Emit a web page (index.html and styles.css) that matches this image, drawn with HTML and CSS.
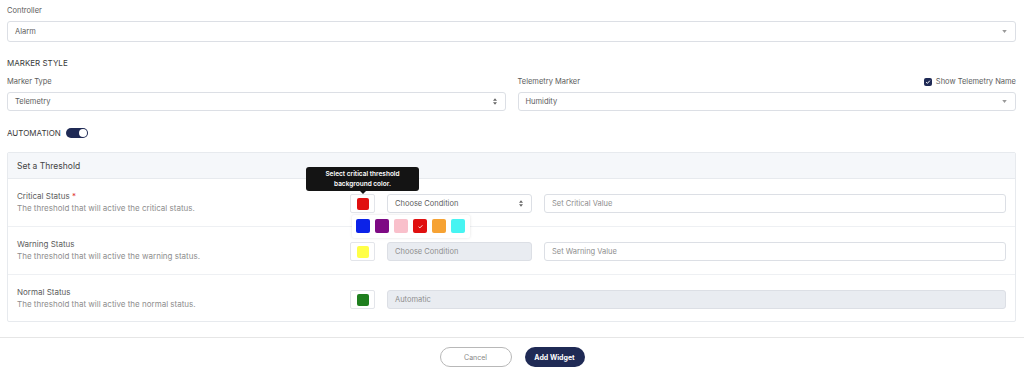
FILE: index.html
```html
<!DOCTYPE html>
<html>
  <head>
    <meta charset="utf-8" />
    <meta name="viewport" content="width=device-width, initial-scale=1" />
    <link rel="stylesheet" href="styles.css">
  </head>
  <body>
    <div class="form">
      <div class="field-label">Controller</div>
      <div class="select tall">
        <span>Alarm</span>
        <svg class="caret" viewBox="0 0 6 4" width="5" height="3"><path d="M0 0 L6 0 L3 4 Z" fill="#999"/></svg>
      </div>

      <div class="section-title">MARKER STYLE</div>
      <div class="two-col">
        <div>
          <div class="field-label">Marker Type</div>
          <div class="select">
            <span>Telemetry</span>
            <svg class="updown" viewBox="0 0 6 10" width="4" height="7"><path d="M0 4 L6 4 L3 0 Z M0 6 L6 6 L3 10 Z" fill="#666"/></svg>
          </div>
        </div>
        <div>
          <div class="field-label split">
            <span>Telemetry Marker</span>
            <span class="check-wrap">
              <span class="checkbox">
                <svg viewBox="0 0 8 8" width="6" height="6"><path d="M1.5 4.2 L3.2 5.8 L6.5 2.2" fill="none" stroke="#fff" stroke-width="1.3"/></svg>
              </span>
              Show Telemetry Name
            </span>
          </div>
          <div class="select">
            <span>Humidity</span>
            <svg class="caret" viewBox="0 0 6 4" width="5" height="3"><path d="M0 0 L6 0 L3 4 Z" fill="#999"/></svg>
          </div>
        </div>
      </div>

      <div class="automation">
        <span>AUTOMATION</span>
        <span class="toggle"><span class="knob"></span></span>
      </div>

      <div class="panel">
        <div class="panel-header">Set a Threshold</div>

        <div class="threshold-row">
          <div class="row-text">
            <div class="row-title">Critical Status <span class="required">*</span></div>
            <div class="row-desc">The threshold that will active the critical status.</div>
          </div>
          <div class="swatch-cell">
            <div class="swatch-box"><span class="swatch red"></span></div>
            <div class="tooltip">Select critical threshold<br>background color.</div>
            <div class="palette">
              <span class="swatch blue"></span>
              <span class="swatch purple"></span>
              <span class="swatch pink"></span>
              <span class="swatch red selected">
                <svg viewBox="0 0 8 8" width="7" height="7"><path d="M1.8 4.2 L3.3 5.6 L6.2 2.6" fill="none" stroke="#fff" stroke-width="1"/></svg>
              </span>
              <span class="swatch orange"></span>
              <span class="swatch cyan"></span>
            </div>
          </div>
          <div class="select small">
            <span>Choose Condition</span>
            <svg class="updown" viewBox="0 0 6 10" width="4" height="7"><path d="M0 4 L6 4 L3 0 Z M0 6 L6 6 L3 10 Z" fill="#666"/></svg>
          </div>
          <div class="input placeholder">Set Critical Value</div>
        </div>

        <div class="threshold-row">
          <div class="row-text">
            <div class="row-title">Warning Status</div>
            <div class="row-desc">The threshold that will active the warning status.</div>
          </div>
          <div class="swatch-cell">
            <div class="swatch-box"><span class="swatch yellow"></span></div>
          </div>
          <div class="input disabled">Choose Condition</div>
          <div class="input placeholder">Set Warning Value</div>
        </div>

        <div class="threshold-row last">
          <div class="row-text">
            <div class="row-title">Normal Status</div>
            <div class="row-desc">The threshold that will active the normal status.</div>
          </div>
          <div class="swatch-cell">
            <div class="swatch-box"><span class="swatch green"></span></div>
          </div>
          <div class="input disabled wide">Automatic</div>
        </div>
      </div>
    </div>

    <div class="footer">
      <button class="btn cancel">Cancel</button>
      <button class="btn primary">Add Widget</button>
    </div>
  </body>
</html>
```

FILE: styles.css
```css
html,
body,
div {
  margin: 0;
  padding: 0;
  box-sizing: border-box;
}

body {
  font-family: Inter, Roboto, "Liberation Sans", sans-serif;
  font-size: 7.5px;
  color: #5a5a5a;
  background: #fff;
}

.form {
  padding: 5px 8px 0 7px;
}

.field-label {
  height: 12px;
  line-height: 12px;
  margin-bottom: 4px;
  color: #5c5c5c;
}
.field-label.split {
  display: flex;
  justify-content: space-between;
  align-items: center;
}
.check-wrap {
  display: flex;
  align-items: center;
  gap: 4px;
  color: #5c5c5c;
}
.checkbox {
  display: flex;
  align-items: center;
  justify-content: center;
  width: 8px;
  height: 8px;
  border-radius: 2px;
  background: #1f2a55;
}

.select,
.input {
  display: flex;
  align-items: center;
  justify-content: space-between;
  height: 19px;
  padding: 0 8px 0 7px;
  border: 1px solid #dcdfe5;
  border-radius: 3px;
  background: #fff;
  color: #5c5c5c;
  font-size: 7.5px;
}
.select.tall {
  height: 21px;
}
.caret,
.updown {
  flex: none;
}

.section-title {
  margin-top: 15px;
  height: 12px;
  line-height: 12px;
  color: #3a3a3a;
  font-size: 8px;
}
.section-title + .two-col {
  margin-top: 7px;
}

.two-col {
  display: grid;
  grid-template-columns: 1fr 1fr;
  column-gap: 12px;
}

.automation {
  display: flex;
  align-items: center;
  gap: 5px;
  margin-top: 16px;
  height: 12px;
  color: #3a3a3a;
  font-size: 8px;
}
.toggle {
  display: flex;
  align-items: center;
  justify-content: flex-end;
  width: 20px;
  height: 10px;
  padding: 0 1px;
  border-radius: 5px;
  background: #1f2a55;
}
.toggle .knob {
  width: 8px;
  height: 8px;
  border-radius: 50%;
  background: #fff;
}

.panel {
  margin-top: 13px;
  border: 1px solid #e7eaee;
  border-radius: 2px;
}
.panel-header {
  height: 26px;
  line-height: 26px;
  padding-left: 9px;
  background: #f5f7fa;
  border-bottom: 1px solid #e7eaee;
  color: #444;
  font-size: 8.5px;
}

.threshold-row {
  display: grid;
  grid-template-columns: 321px 25px 145px 1fr;
  column-gap: 12px;
  align-items: start;
  height: 48px;
  padding: 11px 9px 0;
  border-bottom: 1px solid #eef0f3;
}
.threshold-row.last {
  height: 46px;
  border-bottom: 0;
}
.row-title,
.row-desc {
  height: 12px;
  line-height: 12px;
  white-space: nowrap;
}
.row-title {
  color: #5c5c5c;
  font-size: 8px;
}
.row-desc {
  color: #8e8e8e;
  font-size: 8px;
}
.required {
  color: #e03030;
}

.threshold-row .select,
.threshold-row .input {
  margin-top: 4px;
  height: 19px;
}
.input.placeholder {
  color: #8e8e8e;
}
.input.disabled {
  background: #e9ecf1;
  color: #8e8e8e;
}
.input.wide {
  grid-column: 3 / 5;
}

.swatch-cell {
  position: relative;
  margin-top: 4px;
}
.swatch-box {
  display: flex;
  align-items: center;
  justify-content: center;
  width: 25px;
  height: 19px;
  border: 1px solid #e3e5ea;
  border-radius: 2px;
  background: #fff;
}
.swatch {
  display: flex;
  align-items: center;
  justify-content: center;
  width: 12px;
  height: 12px;
  border-radius: 2px;
}
.palette .swatch {
  width: 14px;
  height: 14px;
}
.red { background: #e01010; }
.blue { background: #0b22e8; }
.purple { background: #7e0a84; }
.pink { background: #f9c0cb; }
.orange { background: #f6a233; }
.cyan { background: #47f4f2; }
.yellow { background: #ffff47; }
.green { background: #1f7f1f; }

.palette {
  position: absolute;
  left: 2px;
  top: 21px;
  z-index: 2;
  display: flex;
  gap: 5px;
  padding: 4px;
  width: 118px;
  height: 23px;
  background: #fff;
  border-radius: 2px;
  box-shadow: 0 0 3px rgba(0, 0, 0, 0.12);
}

.tooltip {
  position: absolute;
  left: -44px;
  bottom: calc(100% + 3px);
  z-index: 3;
  width: 113px;
  height: 24px;
  padding-top: 2px;
  background: #141414;
  border-radius: 3px;
  color: #fff;
  font-size: 6.5px;
  font-weight: 600;
  line-height: 10px;
  text-align: center;
}
.tooltip::after {
  content: "";
  position: absolute;
  top: 100%;
  left: 54px;
  border: 3px solid transparent;
  border-top-color: #141414;
}

.footer {
  display: flex;
  justify-content: center;
  gap: 13px;
  margin-top: 15px;
  padding-top: 9px;
  border-top: 1px solid #e6e6e6;
}
.btn {
  height: 20px;
  border-radius: 10px;
  font-family: Inter, Roboto, "Liberation Sans", sans-serif;
  font-size: 7px;
  cursor: pointer;
}
.btn.cancel {
  width: 72px;
  border: 1px solid #b8b8b8;
  background: #fff;
  color: #888;
}
.btn.primary {
  width: 60px;
  border: 0;
  background: #1f2a55;
  color: #fff;
  font-weight: 700;
}
```
